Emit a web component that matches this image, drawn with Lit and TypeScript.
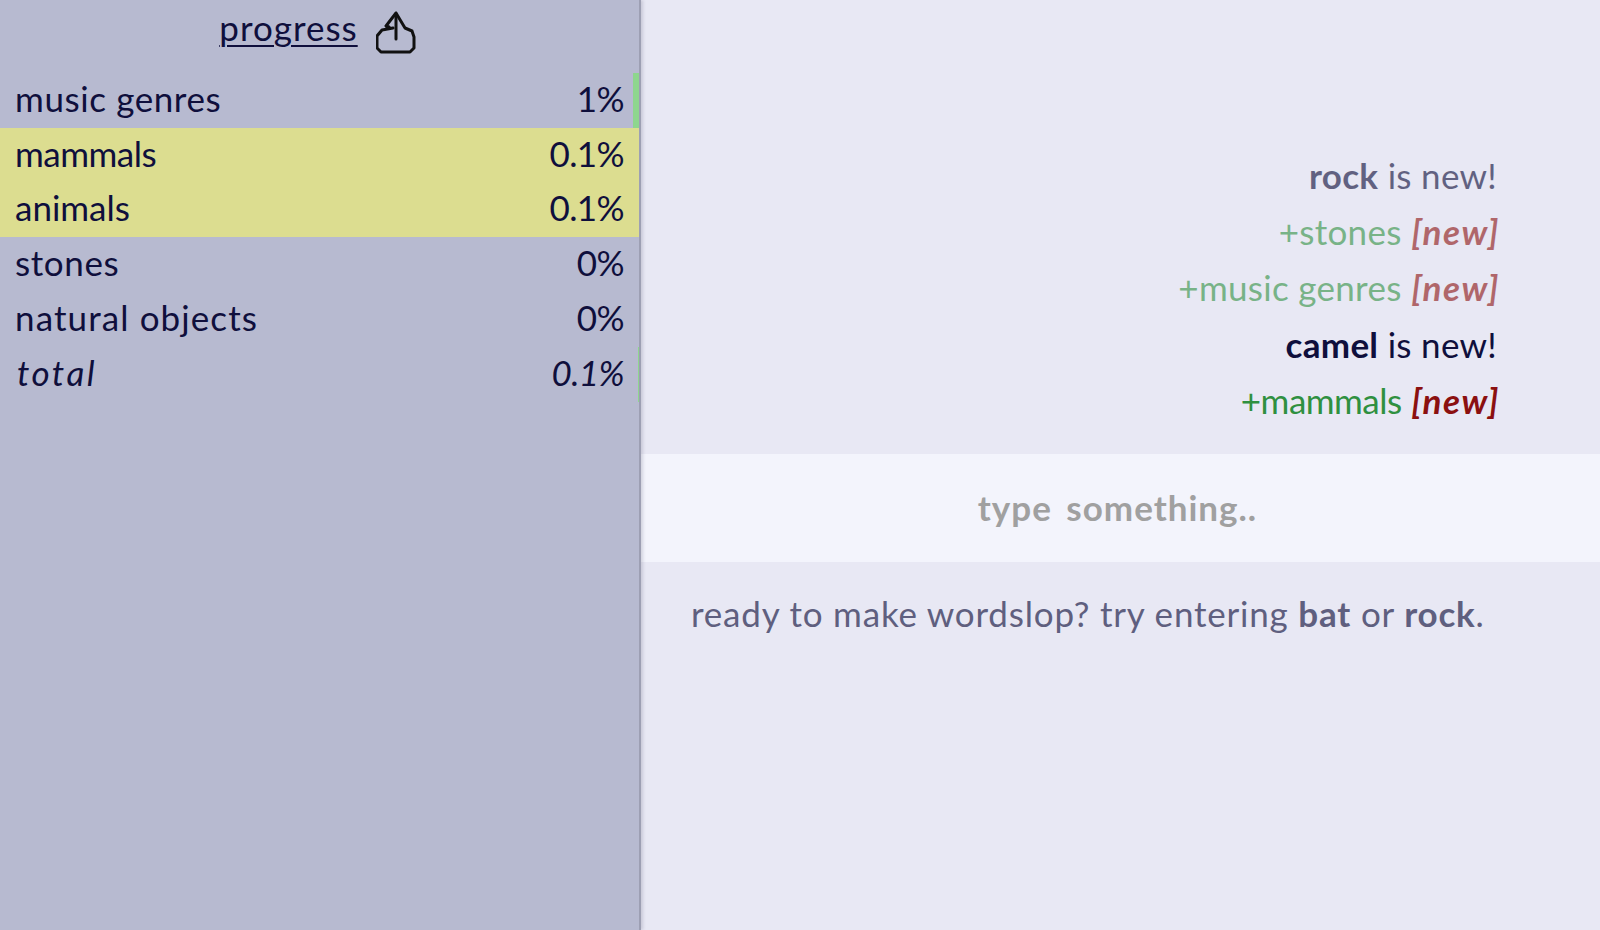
import { LitElement, html, css } from "lit";
import { customElement } from "lit/decorators.js";

const rows = [
  { n: "music genres", p: "1%", bar: 6, s: "" },
  { n: "mammals", p: "0.1%", hl: true, s: "tight" },
  { n: "animals", p: "0.1%", hl: true, s: "snug" },
  { n: "stones", p: "0%", s: "" },
  { n: "natural objects", p: "0%", s: "wide" },
  { n: "total", p: "0.1%", total: true, bar: 1, s: "" },
];

@customElement("app-root")
export class AppRoot extends LitElement {
  static styles = css`
    :host { display: flex; height: 930px; width: 1600px; overflow: hidden;
      font-family: "Lato", "Noto Sans", sans-serif; color: #0f0f3c; font-size: 35px; letter-spacing: 0.6px; }
    .left { width: 641px; box-sizing: border-box; background: #b7bad0; border-right: 2px solid #9d9fb3; flex: none;
      position: relative; box-shadow: 2px 0 3px rgba(60, 60, 90, .18); }
    .head { height: 73px; display: flex; justify-content: center; align-items: flex-start; gap: 18px; padding-right: 4px; }
    .head span { margin-top: 6px; letter-spacing: 1px; text-decoration: underline; text-underline-offset: 4px; text-decoration-thickness: 2px; }
    .head svg { display: block; margin-top: 11px; }
    .row { height: 54.8px; box-sizing: border-box; padding: 0 15px 5px 15px; display: flex; justify-content: space-between; align-items: center; position: relative; }
    .hl { background: #dcdd90; }
    .tight { letter-spacing: -0.5px; }
    .snug { letter-spacing: 0; }
    .wide { letter-spacing: 1.1px; }
    .pct { letter-spacing: -0.6px; }
    .total { font-style: italic; }
    .total span:first-child { padding-left: 2px; letter-spacing: 2.5px; }
    .bar { position: absolute; right: 0; top: 0; bottom: 0; background: #8ed68e; }
    .right { flex: 1; background: #e8e8f4; display: flex; flex-direction: column; }
    .log { height: 454px; box-sizing: border-box; padding: 0 100px 26px 0; display: flex; flex-direction: column; justify-content: flex-end; align-items: flex-end; }
    .log div { line-height: 56.2px; white-space: pre; }
    .note { padding-right: 3px; letter-spacing: 0.3px; }
    .c1 { opacity: .62; } .c2 { opacity: .6; }
    .add { color: #2f9040; letter-spacing: 0.3px; }
    .add.tight { letter-spacing: -0.5px; }
    .new { color: #8b1010; font-style: italic; font-weight: 700; letter-spacing: 1.5px; }
    .input { height: 108px; background: #f3f4fc; color: #a0a0a0; font-weight: 700; letter-spacing: 1px; word-spacing: 5px; display: flex; align-items: center; justify-content: center; padding-right: 6px; padding-bottom: 2px; box-sizing: border-box; }
    .hint { padding: 30px 0 0 50px; color: #5f5f7f; letter-spacing: 0.8px; }
  `;
  render() {
    return html`
      <div class="left">
        <div class="head"><span>progress</span>
          <svg width="40" height="44" viewBox="0 0 40 44" fill="none" stroke="#111" stroke-width="3" stroke-linejoin="round" stroke-linecap="round">
            <path d="M20 2 L10 15 L13 16 M20 2 L29 17 L36 20 L38 26 L38 37 L34 41 L5 41 L1 37 L1 25 L6 19 L17 17"/>
            <path d="M20 3 V28"/>
          </svg>
        </div>
        ${rows.map(r => html`<div class="row ${r.hl ? "hl" : ""} ${r.total ? "total" : ""}">
          <span class=${r.s}>${r.n}</span><span class="pct">${r.p}</span>
          ${r.bar ? html`<i class="bar" style="width:${r.bar}px"></i>` : ""}
        </div>`)}
      </div>
      <div class="right">
        <div class="log">
          <div class="c1 note"><b>rock</b> is new!</div>
          <div class="c2"><span class="add">+stones</span> <span class="new">[new]</span></div>
          <div class="c2"><span class="add">+music genres</span> <span class="new">[new]</span></div>
          <div class="note"><b>camel</b> is new!</div>
          <div><span class="add tight">+mammals</span> <span class="new">[new]</span></div>
        </div>
        <div class="input">type something..</div>
        <div class="hint">ready to make wordslop? try entering <b>bat</b> or <b>rock</b>.</div>
      </div>
    `;
  }
}
